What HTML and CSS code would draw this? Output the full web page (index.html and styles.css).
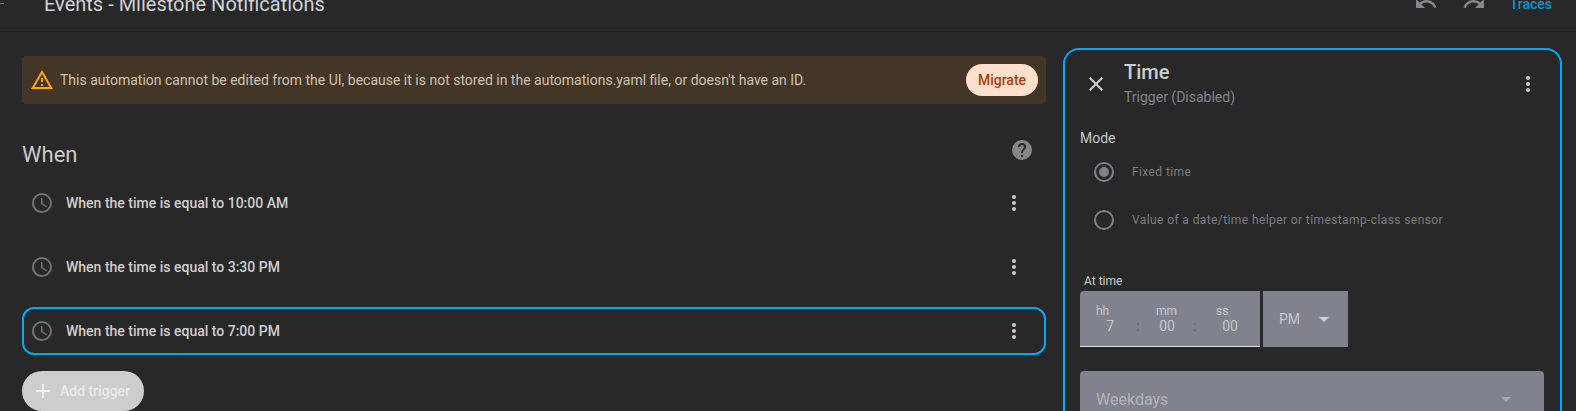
FILE: index.html
```html
<!DOCTYPE html>
<html lang="en">
<head>
<meta charset="utf-8">
<title>Events - Milestone Notifications</title>
<link rel="stylesheet" href="styles.css">
</head>
<body>
<header class="topbar">
  <span class="nav-dash"></span>
  <h1 class="page-title">Events - Milestone Notifications</h1>
  <svg class="icon icon-muted undo" viewBox="0 0 24 24"><path d="M12.5,8C9.85,8 7.45,9 5.6,10.6L2,7V16H11L7.38,12.38C8.77,11.22 10.54,10.5 12.5,10.5C16.04,10.5 19.05,12.81 20.1,16L22.47,15.22C21.08,11.03 17.15,8 12.5,8Z"/></svg>
  <svg class="icon icon-muted" viewBox="0 0 24 24"><path d="M18.4,10.6C16.55,9 14.15,8 11.5,8C6.85,8 2.92,11.03 1.54,15.22L3.9,16C4.95,12.81 7.95,10.5 11.5,10.5C13.45,10.5 15.23,11.22 16.62,12.38L13,16H22V7L18.4,10.6Z"/></svg>
  <span class="traces">Traces</span>
</header>
<main class="layout">
  <section class="left">
    <div class="alert">
      <svg class="icon icon-warn" viewBox="0 0 24 24"><path d="M12,2L1,21H23M12,6L19.53,19H4.47M11,10V14H13V10M11,16V18H13V16"/></svg>
      <span class="alert-text">This automation cannot be edited from the UI, because it is not stored in the automations.yaml file, or doesn't have an ID.</span>
      <span class="migrate">Migrate</span>
    </div>
    <div class="heading">
      <h2 class="heading-title">When</h2>
      <svg class="icon icon-help" viewBox="0 0 24 24"><path d="M15.07,11.25L14.17,12.17C13.45,12.89 13,13.5 13,15H11V14.5C11,13.39 11.45,12.39 12.17,11.67L13.41,10.41C13.78,10.05 14,9.55 14,9C14,7.89 13.1,7 12,7A2,2 0 0,0 10,9H8A4,4 0 0,1 12,5A4,4 0 0,1 16,9C16,9.88 15.64,10.67 15.07,11.25M13,19H11V17H13M12,2A10,10 0 0,0 2,12A10,10 0 0,0 12,22A10,10 0 0,0 22,12C22,6.47 17.5,2 12,2Z"/></svg>
    </div>
    <div class="rows">
      <div class="row">
        <svg class="icon icon-clock" viewBox="0 0 24 24"><path d="M12,20A8,8 0 0,0 20,12A8,8 0 0,0 12,4A8,8 0 0,0 4,12A8,8 0 0,0 12,20M12,2A10,10 0 0,1 22,12A10,10 0 0,1 12,22C6.47,22 2,17.5 2,12A10,10 0 0,1 12,2M12.5,7V12.25L17,14.95L16.25,16.18L11,13V7H12.5Z"/></svg>
        <span class="row-text">When the time is equal to 10:00 AM</span>
        <svg class="icon icon-light" viewBox="0 0 24 24"><path d="M12,16A2,2 0 0,1 14,18A2,2 0 0,1 12,20A2,2 0 0,1 10,18A2,2 0 0,1 12,16M12,10A2,2 0 0,1 14,12A2,2 0 0,1 12,14A2,2 0 0,1 10,12A2,2 0 0,1 12,10M12,4A2,2 0 0,1 14,6A2,2 0 0,1 12,8A2,2 0 0,1 10,6A2,2 0 0,1 12,4Z"/></svg>
      </div>
      <div class="row">
        <svg class="icon icon-clock" viewBox="0 0 24 24"><path d="M12,20A8,8 0 0,0 20,12A8,8 0 0,0 12,4A8,8 0 0,0 4,12A8,8 0 0,0 12,20M12,2A10,10 0 0,1 22,12A10,10 0 0,1 12,22C6.47,22 2,17.5 2,12A10,10 0 0,1 12,2M12.5,7V12.25L17,14.95L16.25,16.18L11,13V7H12.5Z"/></svg>
        <span class="row-text">When the time is equal to 3:30 PM</span>
        <svg class="icon icon-light" viewBox="0 0 24 24"><path d="M12,16A2,2 0 0,1 14,18A2,2 0 0,1 12,20A2,2 0 0,1 10,18A2,2 0 0,1 12,16M12,10A2,2 0 0,1 14,12A2,2 0 0,1 12,14A2,2 0 0,1 10,12A2,2 0 0,1 12,10M12,4A2,2 0 0,1 14,6A2,2 0 0,1 12,8A2,2 0 0,1 10,6A2,2 0 0,1 12,4Z"/></svg>
      </div>
      <div class="row row-selected">
        <svg class="icon icon-clock" viewBox="0 0 24 24"><path d="M12,20A8,8 0 0,0 20,12A8,8 0 0,0 12,4A8,8 0 0,0 4,12A8,8 0 0,0 12,20M12,2A10,10 0 0,1 22,12A10,10 0 0,1 12,22C6.47,22 2,17.5 2,12A10,10 0 0,1 12,2M12.5,7V12.25L17,14.95L16.25,16.18L11,13V7H12.5Z"/></svg>
        <span class="row-text">When the time is equal to 7:00 PM</span>
        <svg class="icon icon-light" viewBox="0 0 24 24"><path d="M12,16A2,2 0 0,1 14,18A2,2 0 0,1 12,20A2,2 0 0,1 10,18A2,2 0 0,1 12,16M12,10A2,2 0 0,1 14,12A2,2 0 0,1 12,14A2,2 0 0,1 10,12A2,2 0 0,1 12,10M12,4A2,2 0 0,1 14,6A2,2 0 0,1 12,8A2,2 0 0,1 10,6A2,2 0 0,1 12,4Z"/></svg>
      </div>
    </div>
    <div class="add-btn">
      <svg class="icon-plus" viewBox="0 0 12 12"><path d="M5.2 0h1.6v5.2H12v1.6H6.8V12H5.2V6.8H0V5.2h5.2z"/></svg>
      <span>Add trigger</span>
    </div>
  </section>
  <aside class="panel">
    <div class="panel-head">
      <svg class="icon icon-light" viewBox="0 0 24 24"><path d="M19,6.41L17.59,5L12,10.59L6.41,5L5,6.41L10.59,12L5,17.59L6.41,19L12,13.41L17.59,19L19,17.59L13.41,12L19,6.41Z"/></svg>
      <div class="panel-titles">
        <div class="panel-title">Time</div>
        <div class="panel-sub">Trigger (Disabled)</div>
      </div>
      <svg class="icon icon-light" viewBox="0 0 24 24"><path d="M12,16A2,2 0 0,1 14,18A2,2 0 0,1 12,20A2,2 0 0,1 10,18A2,2 0 0,1 12,16M12,10A2,2 0 0,1 14,12A2,2 0 0,1 12,14A2,2 0 0,1 10,12A2,2 0 0,1 12,10M12,4A2,2 0 0,1 14,6A2,2 0 0,1 12,8A2,2 0 0,1 10,6A2,2 0 0,1 12,4Z"/></svg>
    </div>
    <div class="panel-body">
      <div class="mode-label">Mode</div>
      <div class="radio-row">
        <span class="radio radio-on"></span>
        <span class="radio-text">Fixed time</span>
      </div>
      <div class="radio-row">
        <span class="radio"></span>
        <span class="radio-text">Value of a date/time helper or timestamp-class sensor</span>
      </div>
      <div class="time-label">At time</div>
      <div class="time-line">
        <div class="time-field">
          <div class="seg seg-h"><span class="seg-label">hh</span><span class="seg-value">7</span></div>
          <span class="colon colon-a">:</span>
          <div class="seg seg-m"><span class="seg-label">mm</span><span class="seg-value">00</span></div>
          <span class="colon colon-b">:</span>
          <div class="seg seg-s"><span class="seg-label">ss</span><span class="seg-value">00</span></div>
        </div>
        <div class="ampm"><span>PM</span><span class="arrow"></span></div>
      </div>
      <div class="weekdays"><span>Weekdays</span><span class="arrow arrow-dim"></span></div>
    </div>
  </aside>
</main>
</body>
</html>
```

FILE: styles.css
```css
* { box-sizing: border-box; }
html, body { margin: 0; height: 411px; overflow: hidden; background: #282828; }
body { font-family: Roboto, "Liberation Sans", sans-serif; color: #d0d0d0; font-size: 14px; }
h1, h2 { margin: 0; font-weight: 400; }
.icon { width: 24px; height: 24px; flex: none; display: block; }
.icon-muted { fill: #85878f; }
.icon-warn { fill: #ffa600; }
.icon-help { fill: #85858a; }
.icon-clock { fill: #727272; }
.icon-light { fill: #cdcdcd; }

.topbar { height: 32px; display: flex; align-items: flex-end; padding: 0 24px 15px 0; border-bottom: 1px solid #1f1f1f; overflow: hidden; }
.nav-dash { width: 4px; height: 1px; background: #03a9f4; margin-bottom: 12px; flex: none; }
.page-title { margin-left: 40px; font-size: 20px; line-height: 24px; color: #cfd2d6; flex: 1; }
.undo { margin-right: 24px; }
.traces { margin-left: 24px; font-weight: 500; line-height: 24px; color: #0b96d0; }

.layout { display: grid; grid-template-columns: 1024px 499px; column-gap: 17px; padding: 16px 0 0 22px; }
.left { padding-top: 8px; }

.alert { height: 48px; display: flex; align-items: center; background: #433626; border-radius: 4px; padding: 0 8px; }
.alert-text { flex: 1; margin-left: 6px; color: #cbc3b6; }
.migrate { width: 72px; height: 32px; border-radius: 16px; background: #ffe0cc; color: #a93f0b; font-weight: 500; display: flex; align-items: center; justify-content: center; }

.heading { margin-top: 34px; height: 33px; display: flex; align-items: flex-start; justify-content: space-between; padding-right: 12px; margin-bottom: 8px; }
.heading-title { font-size: 22px; line-height: 34px; color: #cacaca; }

.rows { display: flex; flex-direction: column; gap: 16px; }
.row { height: 48px; display: flex; align-items: center; border: 2px solid transparent; border-radius: 12px; padding: 0 18px 0 6px; }
.row-selected { border-color: #03a9f4; }
.row-text { flex: 1; margin-left: 12px; font-weight: 500; color: #cfcfcf; }

.add-btn { margin-top: 16px; width: 122px; height: 40px; border-radius: 20px; background: #cdcdcd; color: #e9e9e9; font-weight: 500; display: flex; align-items: center; padding-left: 14px; gap: 10px; }
.icon-plus { width: 12px; height: 12px; fill: #f2f2f2; }
.icon-plus { width: 14px; height: 14px; flex: none; }

.panel { height: 420px; border: 2px solid #03a9f4; border-radius: 16px; }
.panel-head { height: 52px; margin-top: 8px; display: flex; align-items: center; padding: 0 20px 0 19px; }
.panel-titles { flex: 1; align-self: flex-start; margin-left: 16px; }
.panel-title { font-size: 20px; font-weight: 500; line-height: 28px; color: #cfcfcf; }
.panel-sub { line-height: 22px; color: #85858a; }
.panel-body { padding: 18px 16px 0 15px; }
.mode-label { line-height: 20px; color: #c8c8c8; }
.radio-row { height: 48px; display: flex; align-items: center; padding-left: 14px; gap: 18px; }
.radio { width: 20px; height: 20px; border: 2px solid #7f818a; border-radius: 50%; display: flex; align-items: center; justify-content: center; flex: none; }
.radio-on::after { content: ""; width: 10px; height: 10px; border-radius: 50%; background: #7f818a; }
.radio-text { font-size: 12px; letter-spacing: .4px; color: #7b7d85; }
.time-label { margin-top: 29px; padding-left: 4px; font-size: 12px; line-height: 16px; color: #cbcbcb; }
.time-line { margin-top: 2px; display: flex; gap: 3px; }
.time-field { width: 180px; height: 56px; background: #80838e; border-bottom: 1px solid #e2e2e2; border-radius: 4px 0 0 0; padding: 13px 0 0 16px; display: flex; align-items: flex-start; }
.seg { display: flex; flex-direction: column; color: #c5c6ca; }
.seg-label { font-size: 12px; line-height: 14px; }
.seg-value { line-height: 16px; text-align: right; }
.seg-h { width: 18px; }
.seg-m { width: 19px; }
.seg-s { width: 22px; }
.colon { height: 30px; display: flex; align-items: flex-end; padding-bottom: 0; line-height: 16px; color: #5f6168; }
.colon-a { width: 42px; padding-left: 22px; }
.colon-b { width: 41px; padding-left: 18px; }
.ampm { width: 85px; height: 56px; background: #80838e; display: flex; align-items: center; padding-left: 16px; gap: 19px; color: #c5c6ca; }
.arrow { width: 0; height: 0; border-left: 5px solid transparent; border-right: 5px solid transparent; border-top: 5px solid #d0d1d4; flex: none; }
.arrow-dim { border-top-color: #a5a6ac; }
.weekdays { margin-top: 24px; height: 56px; background: #80838e; border-radius: 4px 4px 0 0; display: flex; align-items: center; justify-content: space-between; padding: 0 33px 0 16px; font-size: 16px; color: #b3b4b9; }
```
